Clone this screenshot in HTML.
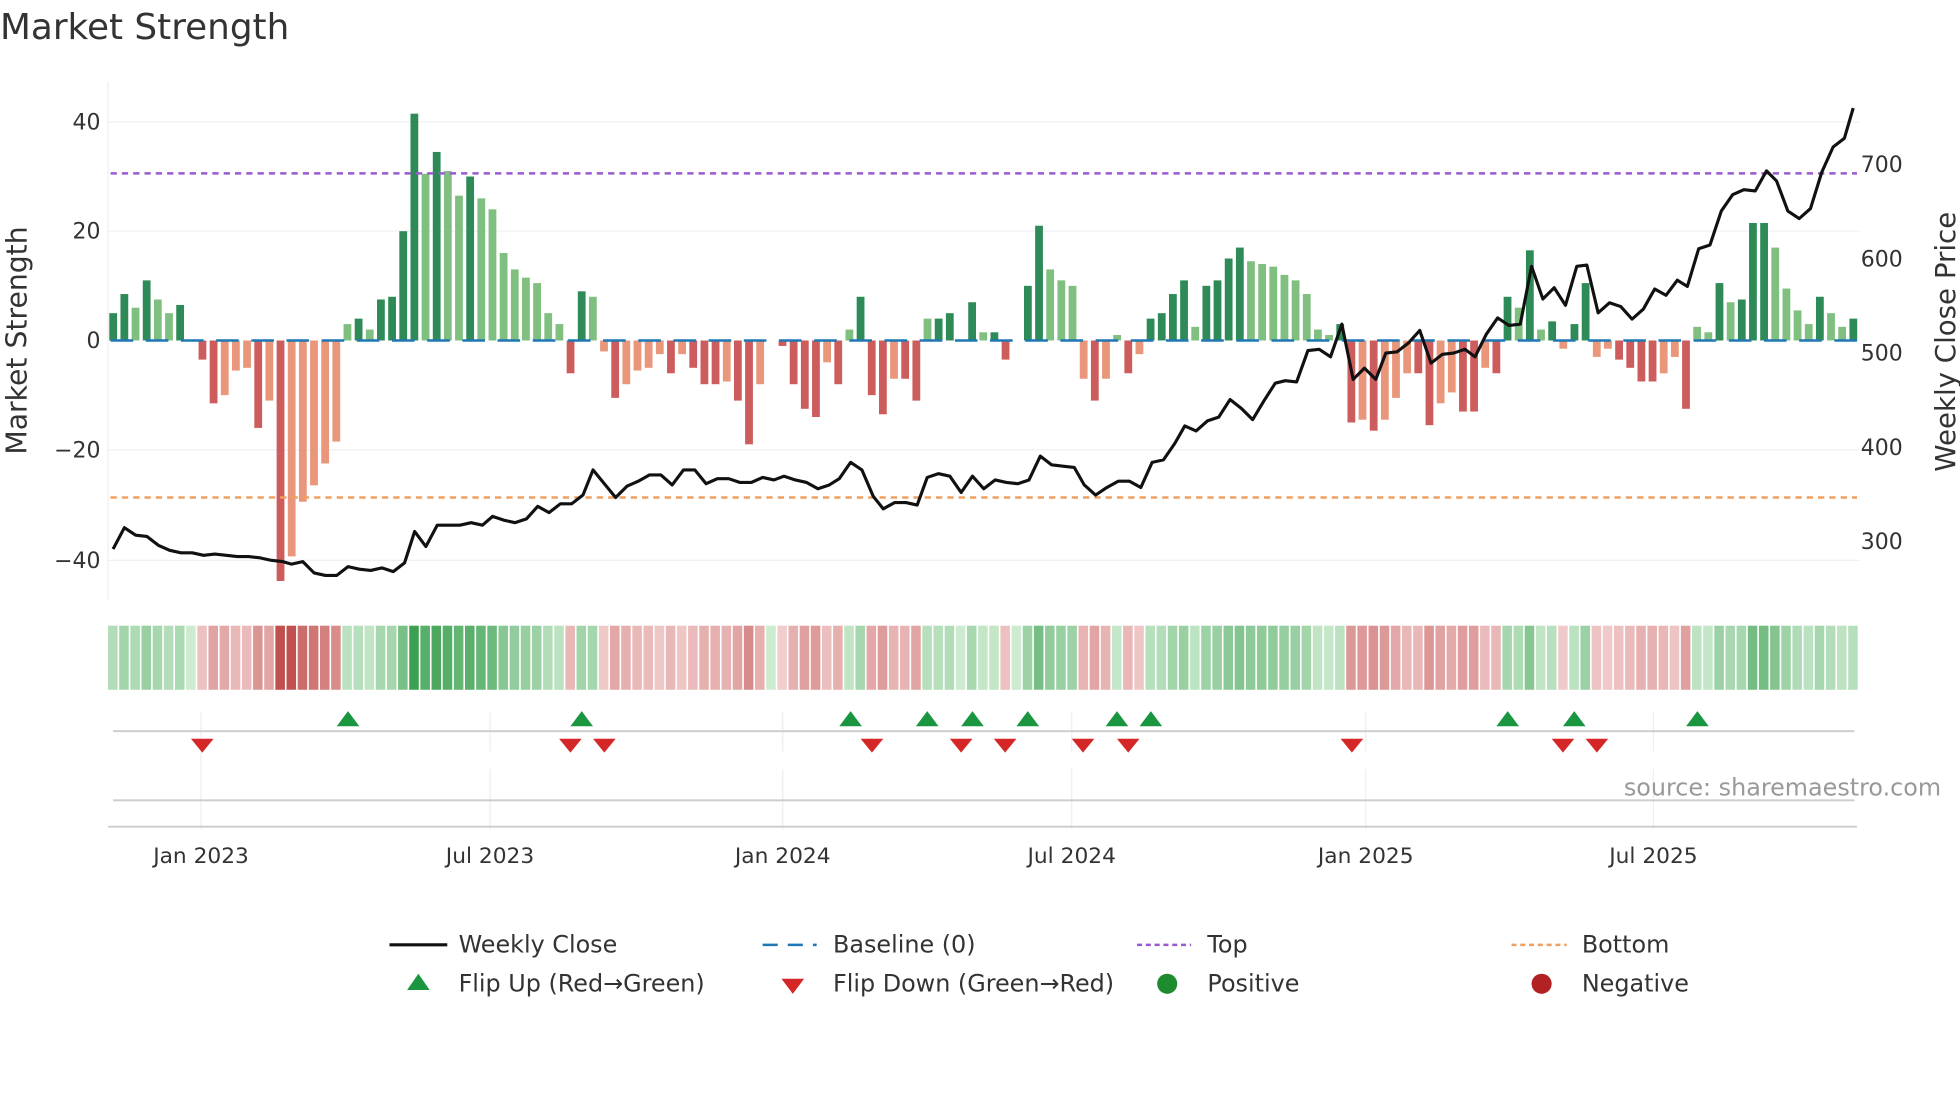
<!DOCTYPE html>
<html><head><meta charset="utf-8"><style>
html,body{margin:0;padding:0;background:#fff;}
svg{display:block;font-family:"DejaVu Sans","Liberation Sans",sans-serif;}
</style></head><body>
<svg id="s" width="1960" height="1102" viewBox="0 0 1560 877.1" xmlns="http://www.w3.org/2000/svg">
<text x="0" y="31" font-size="28.5" fill="#333">Market Strength</text>
<line x1="86" y1="65" x2="86" y2="478" stroke="#eee" stroke-width="1"/>
<g stroke="#eef0f3" stroke-width="1">
<line x1="86" y1="97" x2="1480" y2="97"/><line x1="86" y1="184" x2="1480" y2="184"/>
<line x1="86" y1="358" x2="1480" y2="358"/><line x1="86" y1="446" x2="1480" y2="446"/>
</g>
<g font-size="17.5" fill="#333" text-anchor="end">
<text x="80" y="103">40</text><text x="80" y="190">20</text><text x="80" y="277">0</text>
<text x="80" y="364">−20</text><text x="80" y="452">−40</text>
</g>
<g font-size="17.5" fill="#333">
<text x="1481" y="137">700</text><text x="1481" y="212">600</text><text x="1481" y="287">500</text>
<text x="1481" y="362">400</text><text x="1481" y="437">300</text>
</g>
<text transform="translate(21,271) rotate(-90)" font-size="22.5" fill="#333" text-anchor="middle">Market Strength</text>
<text transform="translate(1556,272) rotate(-90)" font-size="22" fill="#333" text-anchor="middle">Weekly Close Price</text>
<g id="bars"></g>
<line x1="88" y1="271" x2="1478" y2="271" stroke="#1f77b4" stroke-width="2" stroke-dasharray="18,10"/>
<line x1="88" y1="138" x2="1478" y2="138" stroke="#9b59d0" stroke-width="2" stroke-dasharray="5,4"/>
<line x1="88" y1="396" x2="1478" y2="396" stroke="#f0a060" stroke-width="2" stroke-dasharray="5,4"/>
<polyline id="price" fill="none" stroke="#111" stroke-width="2.5" stroke-linejoin="round"/>
<g id="strip"></g>
<g stroke="#eee" stroke-width="1">
<line x1="160" y1="567" x2="160" y2="660"/><line x1="390" y1="567" x2="390" y2="598"/>
<line x1="623" y1="567" x2="623" y2="598"/><line x1="853" y1="567" x2="853" y2="598"/>
<line x1="1087" y1="567" x2="1087" y2="598"/><line x1="1316" y1="567" x2="1316" y2="598"/>
<line x1="390" y1="612" x2="390" y2="660"/><line x1="623" y1="612" x2="623" y2="660"/>
<line x1="853" y1="612" x2="853" y2="660"/><line x1="1087" y1="612" x2="1087" y2="660"/><line x1="1316" y1="612" x2="1316" y2="660"/>
</g>
<line x1="90" y1="582" x2="1476" y2="582" stroke="#ccc" stroke-width="1.5"/>
<line x1="90" y1="637" x2="1476" y2="637" stroke="#ccc" stroke-width="1.5"/>
<line x1="86" y1="658" x2="1478" y2="658" stroke="#ccc" stroke-width="1.5"/>
<g id="tri"></g>
<text x="1545" y="633" font-size="19" fill="#999" text-anchor="end">source: sharemaestro.com</text>
<g font-size="17.3" fill="#333" text-anchor="middle">
<text x="160" y="687">Jan 2023</text><text x="390" y="687">Jul 2023</text><text x="623" y="687">Jan 2024</text>
<text x="853" y="687">Jul 2024</text><text x="1087" y="687">Jan 2025</text><text x="1316" y="687">Jul 2025</text>
</g>
<g font-size="19" fill="#333">
<line x1="310" y1="752" x2="356" y2="752" stroke="#111" stroke-width="2.5"/>
<text x="365" y="758">Weekly Close</text>
<line x1="607" y1="752" x2="650" y2="752" stroke="#1f77b4" stroke-width="2" stroke-dasharray="12,8"/>
<text x="663" y="758">Baseline (0)</text>
<line x1="905" y1="752" x2="948" y2="752" stroke="#9b59d0" stroke-width="2" stroke-dasharray="4,3"/>
<text x="961" y="758">Top</text>
<line x1="1203" y1="752" x2="1247" y2="752" stroke="#f0a060" stroke-width="2" stroke-dasharray="4,3"/>
<text x="1259" y="758">Bottom</text>
<polygon points="324,788 342,788 333,775" fill="#1a9641"/>
<text x="365" y="789">Flip Up (Red→Green)</text>
<polygon points="622,779 640,779 631,791" fill="#d62728"/>
<text x="663" y="789">Flip Down (Green→Red)</text>
<circle cx="929" cy="783" r="8" fill="#1e8c2e"/>
<text x="961" y="789">Positive</text>
<circle cx="1227" cy="783" r="8" fill="#b22222"/>
<text x="1259" y="789">Negative</text>
</g>
</svg>
<script>
var v=[5,8.5,6,11,7.5,5,6.5,0,-3.5,-11.5,-10,-5.5,-5,-16,-11,-44,-39.5,-29.5,-26.5,-22.5,-18.5,3,4,2,7.5,8,20,41.5,30.5,34.5,31,26.5,30,26,24,16,13,11.5,10.5,5,3,-6,9,8,-2,-10.5,-8,-5.5,-5,-2.5,-6,-2.5,-5,-8,-8,-7.5,-11,-19,-8,0,-1,-8,-12.5,-14,-4,-8,2,8,-10,-13.5,-7,-7,-11,4,4,5,0,7,1.5,1.5,-3.5,0,10,21,13,11,10,-7,-11,-7,1,-6,-2.5,4,5,8.5,11,2.5,10,11,15,17,14.5,14,13.5,12,11,8.5,2,1,3,-15,-14.5,-16.5,-14.5,-10.5,-6,-6,-15.5,-11.5,-9.5,-13,-13,-5,-6,8,6,16.5,2,3.5,-1.5,3,10.5,-3,-1.5,-3.5,-5,-7.5,-7.5,-6,-3,-12.5,2.5,1.5,10.5,7,7.5,21.5,21.5,17,9.5,5.5,3,8,5,2.5,4];
var n=v.length,sp=(1475-90)/(n-1),NS="http://www.w3.org/2000/svg";
function el(p,t,a){var e=document.createElementNS(NS,t);for(var k in a)e.setAttribute(k,a[k]);p.appendChild(e);return e;}
var B=document.getElementById('bars'),S=document.getElementById('strip');
function mix(a,b,t){t=Math.max(0,Math.min(1,t));var r=[];for(var i=0;i<3;i++)r.push(Math.round(a[i]+(b[i]-a[i])*t));return 'rgb('+r+')';}
for(var i=0;i<n;i++){
 var x=90+sp*i,val=v[i],h=Math.abs(val)*4.35;
 var prev=i>0?v[i-1]:0, dark=Math.abs(val)>=Math.abs(prev);
 var c=val>=0?(dark?'#2e8b57':'#7fbf7f'):(dark?'#cd5c5c':'#e9967a');
 if(val!=0) el(B,'rect',{x:x-3,y:val>0?271-h:271,width:6.2,height:h,fill:c});
 var t=Math.min(1,Math.abs(val)/40);
 var sc=val>=0?mix([205,235,208],[60,160,80],Math.pow(t,0.8)):mix([244,212,212],[192,80,77],Math.pow(t,0.8));
 el(S,'rect',{x:x-4,y:498,width:7.6,height:51,fill:sc});
}
var pts="90,437 99,420 108,426 117,427 126,434 135,438 144,440 153,440 162,442 171,441 180,442 189,443 198,443 207,444 216,446 225,447 232,449 241,447 250,456 259,458 268,458 277,451 286,453 295,454 304,452 313,455 322,448 330,423 339,435 348,418 357,418 366,418 375,416 384,418 392,411 401,414 410,416 419,413 428,403 437,408 446,401 455,401 464,394 472,374 481,385 490,396 499,387 508,383 517,378 526,378 535,386 544,374 553,374 562,385 571,381 580,381 589,384 598,384 607,380 616,382 624,379 633,382 642,384 651,389 660,386 668,381 677,368 686,374 695,395 703,405 712,400 721,400 730,402 738,380 747,377 756,379 765,392 774,379 783,389 792,382 801,384 810,385 819,382 828,363 837,370 846,371 855,372 863,386 872,394 881,388 890,383 899,383 908,388 917,368 926,366 935,353 943,339 952,343 961,335 970,332 979,318 988,325 997,334 1006,319 1015,305 1023,303 1032,304 1041,279 1050,278 1059,284 1068,258 1077,302 1086,293 1095,302 1103,281 1112,280 1121,273 1130,263 1139,289 1148,282 1157,281 1166,278 1174,284 1183,266 1192,253 1201,259 1210,258 1219,212 1228,238 1237,229 1246,243 1255,212 1263,211 1272,249 1281,241 1290,244 1299,254 1308,246 1317,230 1326,235 1335,223 1343,228 1352,198 1361,195 1370,168 1379,155 1388,151 1397,152 1406,136 1414,144 1423,168 1432,174 1441,166 1450,137 1459,117 1468,110 1475,86";
document.getElementById('price').setAttribute('points',pts);
var T=document.getElementById('tri');
[277,463,677,738,774,818,889,916,1200,1253,1351].forEach(function(x){el(T,'polygon',{points:(x-9)+',578 '+(x+9)+',578 '+x+',566',fill:'#1a9641'});});
[161,454,481,694,765,800,862,898,1076,1244,1271].forEach(function(x){el(T,'polygon',{points:(x-9)+',588 '+(x+9)+',588 '+x+',599',fill:'#d62728'});});
</script>
</body></html>
